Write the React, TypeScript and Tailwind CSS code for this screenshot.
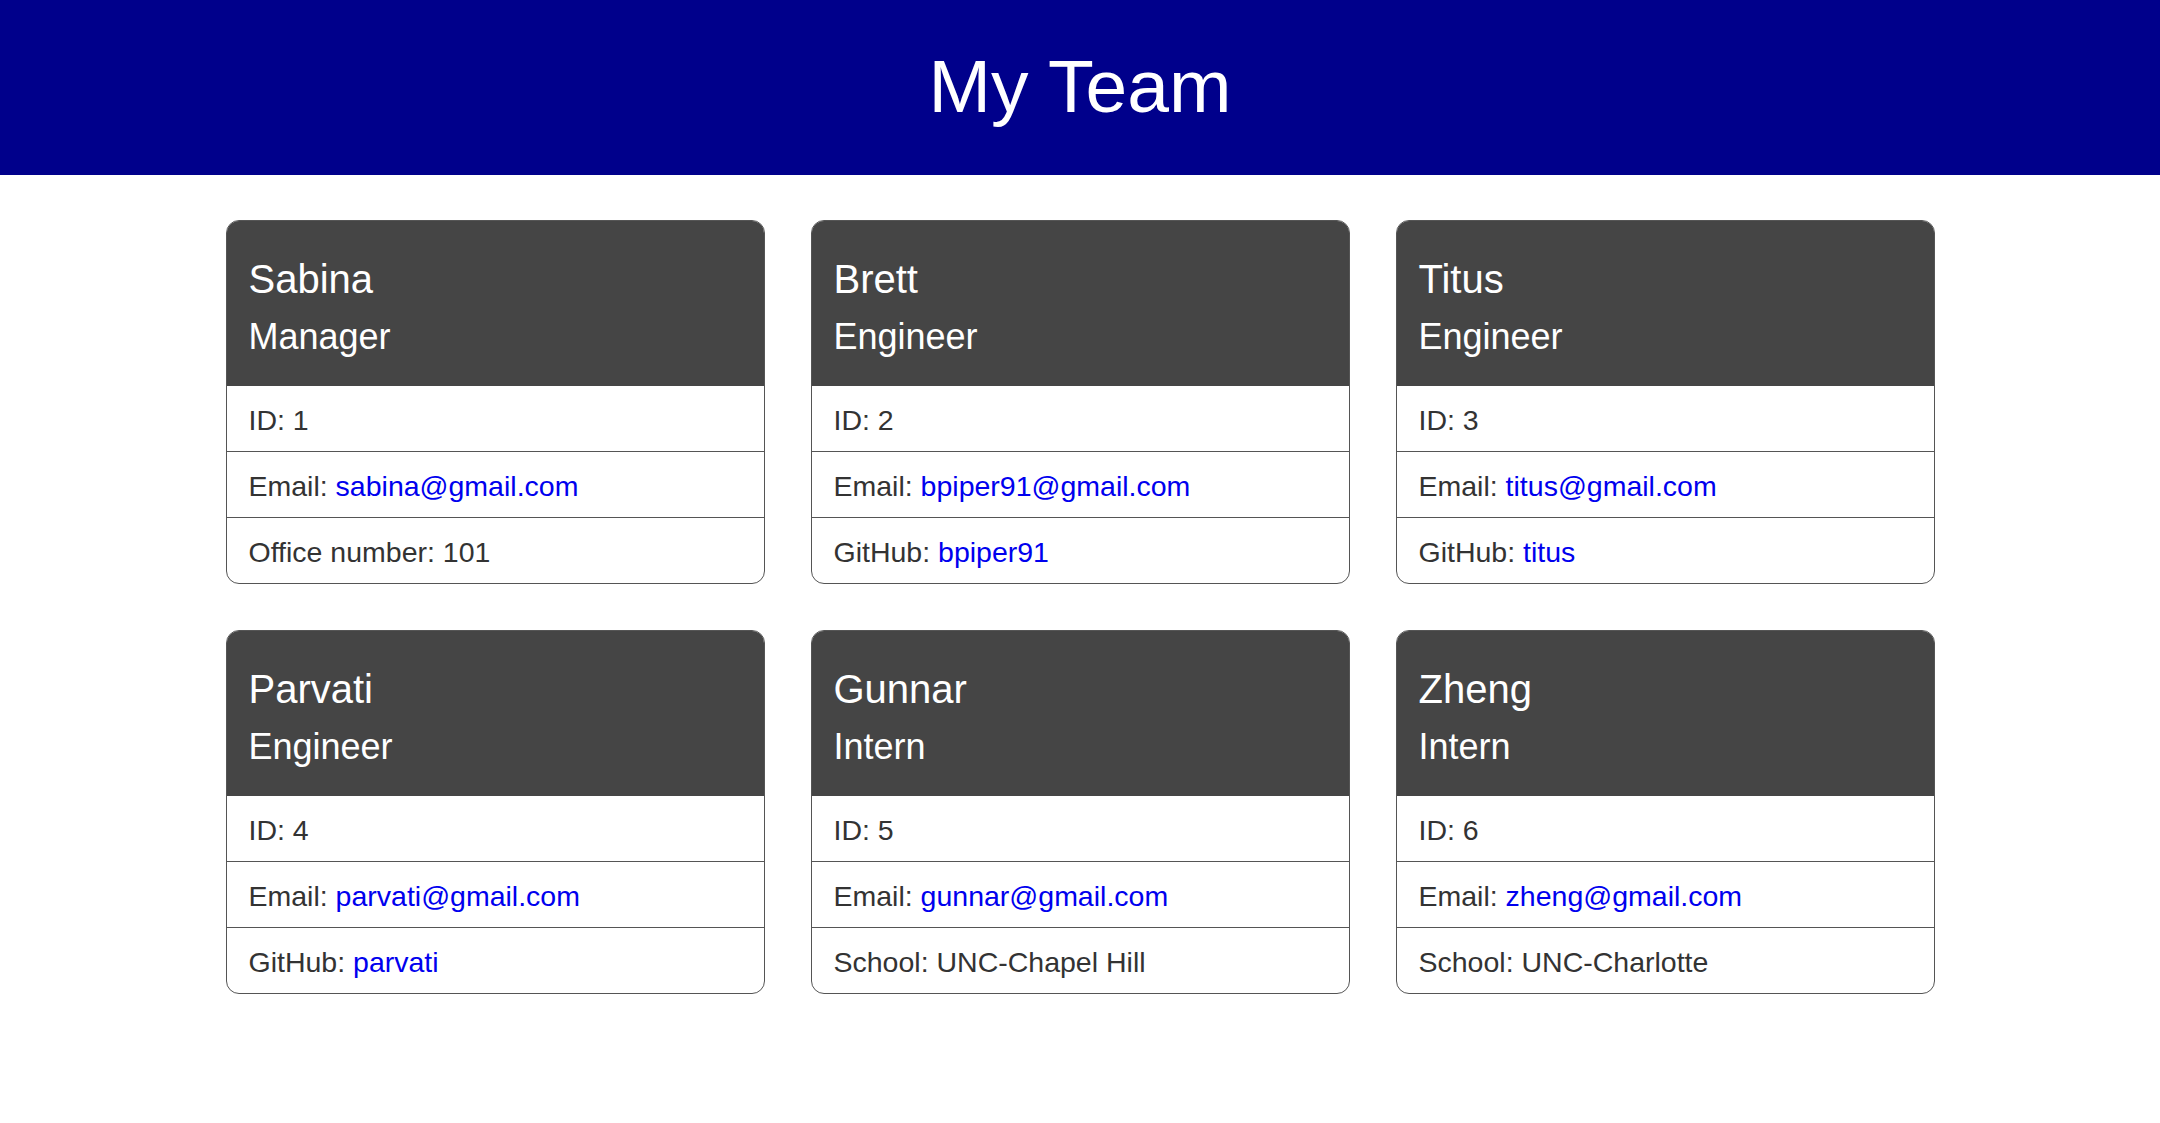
import type { ReactNode } from 'react'

interface Member {
  name: string
  role: string
  id: number
  email: string
  extraLabel: string
  extraValue: string
  extraIsLink?: boolean
}

const team: Member[] = [
  { name: 'Sabina', role: 'Manager', id: 1, email: 'sabina@gmail.com', extraLabel: 'Office number', extraValue: '101' },
  { name: 'Brett', role: 'Engineer', id: 2, email: 'bpiper91@gmail.com', extraLabel: 'GitHub', extraValue: 'bpiper91', extraIsLink: true },
  { name: 'Titus', role: 'Engineer', id: 3, email: 'titus@gmail.com', extraLabel: 'GitHub', extraValue: 'titus', extraIsLink: true },
  { name: 'Parvati', role: 'Engineer', id: 4, email: 'parvati@gmail.com', extraLabel: 'GitHub', extraValue: 'parvati', extraIsLink: true },
  { name: 'Gunnar', role: 'Intern', id: 5, email: 'gunnar@gmail.com', extraLabel: 'School', extraValue: 'UNC-Chapel Hill' },
  { name: 'Zheng', role: 'Intern', id: 6, email: 'zheng@gmail.com', extraLabel: 'School', extraValue: 'UNC-Charlotte' },
]

function Row({ children, divider }: { children: ReactNode; divider?: boolean }) {
  return (
    <li
      className={
        divider
          ? 'flex h-[66px] items-center border-t border-[#555] px-[22px] pt-[2px]'
          : 'flex h-[65px] items-center px-[22px] pt-[2px]'
      }
    >
      {children}
    </li>
  )
}

function Link({ children }: { children: ReactNode }) {
  return <a className="text-[#0000ee]">{children}</a>
}

function MemberCard({ member }: { member: Member }) {
  return (
    <div className="overflow-hidden rounded-[13px] border border-[#555] bg-white">
      <div className="h-[165px] bg-[#454545] px-[22px] pt-[34px] text-white">
        <h2 className="mb-[13px] text-[40px] leading-[48px]">{member.name}</h2>
        <h3 className="text-[36px] leading-[42px]">{member.role}</h3>
      </div>
      <ul className="text-[28.5px] leading-[34px] text-[#333]">
        <Row>ID: {member.id}</Row>
        <Row divider>
          <span>
            Email: <Link>{member.email}</Link>
          </span>
        </Row>
        <Row divider>
          <span>
            {member.extraLabel}:{' '}
            {member.extraIsLink ? <Link>{member.extraValue}</Link> : member.extraValue}
          </span>
        </Row>
      </ul>
    </div>
  )
}

export default function App() {
  return (
    <div className="min-h-screen w-full bg-white font-['Liberation_Sans',Arial,sans-serif]">
      <header className="flex h-[175px] items-center justify-center bg-[#00008b]">
        <h1 className="pb-[2px] text-[75px] leading-none text-white">My Team</h1>
      </header>

      <main className="grid grid-cols-[repeat(3,539px)] justify-center gap-[46px] pt-[45px]">
        {team.map((m) => (
          <MemberCard key={m.id} member={m} />
        ))}
      </main>
    </div>
  )
}
